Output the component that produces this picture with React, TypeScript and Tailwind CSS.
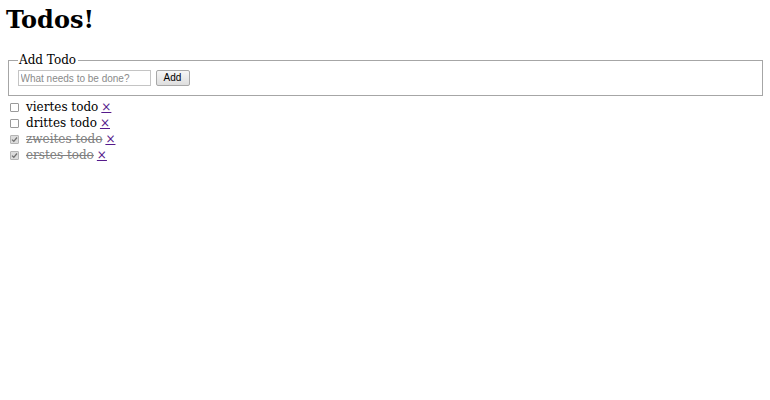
import { useState } from "react";

type Todo = { id: number; text: string; done: boolean };

const Box = ({ checked, onClick }: { checked: boolean; onClick: () => void }) => (
  <span
    onClick={onClick}
    className={
      checked
        ? "inline-flex items-center justify-center w-[9px] h-[9px] mr-[7px] ml-[4px] rounded-[1px] border border-[#b5b5b5] bg-[#dcdcdc] cursor-pointer"
        : "inline-flex items-center justify-center w-[9px] h-[9px] mr-[7px] ml-[4px] rounded-[1px] border border-[#9a9a9a] bg-white cursor-pointer"
    }
  >
    {checked && (
      <svg width="7" height="7" viewBox="0 0 7 7">
        <path d="M1 3.6 L2.8 5.3 L6 1.5" fill="none" stroke="#707070" strokeWidth="1.3" />
      </svg>
    )}
  </span>
);

export default function App() {
  const [todos, setTodos] = useState<Todo[]>([
    { id: 4, text: "viertes todo", done: false },
    { id: 3, text: "drittes todo", done: false },
    { id: 2, text: "zweites todo", done: true },
    { id: 1, text: "erstes todo", done: true },
  ]);
  const [text, setText] = useState("");

  const addTodo = () => {
    if (!text.trim()) return;
    setTodos([{ id: Date.now(), text, done: false }, ...todos]);
    setText("");
  };

  return (
    <div className="min-h-[400px] bg-white px-[6px] pt-[6px] text-black font-['DejaVu_Serif',serif] text-[12px]">
      <h1 className="text-[24px] leading-[28px] font-bold">Todos!</h1>

      <fieldset className="mt-[19px] mx-[1.5px] border border-[#a6a6a6] px-[9px] pt-[3px] pb-[9px]">
        <legend className="px-[1.5px] text-[12px] leading-[14px]">Add Todo</legend>
        <div className="flex items-center">
          <input
            value={text}
            onChange={(e) => setText(e.target.value)}
            placeholder="What needs to be done?"
            className="w-[133px] h-[16px] px-[2px] border border-[#c4c4c4] bg-white text-[10px] font-['Liberation_Sans',Arial,sans-serif] placeholder:text-[#8a8a8a] outline-none"
          />
          <button
            onClick={addTodo}
            className="ml-[5px] w-[34px] h-[16px] rounded-[2px] border border-[#a8a8a8] bg-gradient-to-b from-[#f6f6f6] to-[#dedede] text-[10px] leading-none font-['Liberation_Sans',Arial,sans-serif]"
          >
            Add
          </button>
        </div>
      </fieldset>

      <ul className="mt-[3px]">
        {todos.map((t) => (
          <li key={t.id} className="flex items-center h-[16px] leading-[16px]">
            <Box
              checked={t.done}
              onClick={() =>
                setTodos(todos.map((x) => (x.id === t.id ? { ...x, done: !x.done } : x)))
              }
            />
            <span className={t.done ? "line-through text-[#808080]" : ""}>{t.text}</span>
            <a
              href="#"
              onClick={(e) => {
                e.preventDefault();
                setTodos(todos.filter((x) => x.id !== t.id));
              }}
              className="ml-[3px] text-[#551a8b] underline"
            >
              ×
            </a>
          </li>
        ))}
      </ul>
    </div>
  );
}
